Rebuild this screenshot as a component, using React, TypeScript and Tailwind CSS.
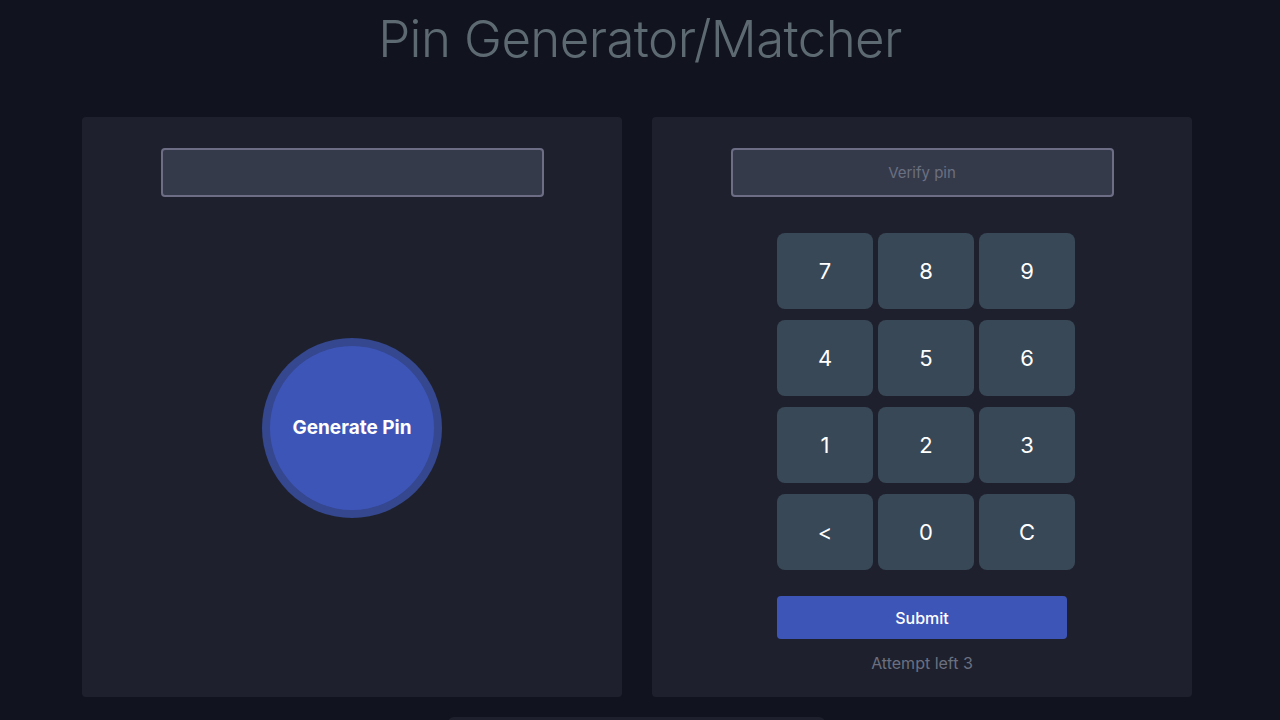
const KEYS = ["7", "8", "9", "4", "5", "6", "1", "2", "3", "<", "0", "C"];

export default function App() {
  return (
    <div className="h-screen bg-[#11141e] font-['Inter','Liberation_Sans',sans-serif] overflow-hidden">
      <h1 className="pt-[7px] text-center text-[51px] font-light leading-[64px] tracking-[-0.6px] text-[#5e6a72]">
        Pin Generator/Matcher
      </h1>

      <div className="mx-auto mt-[46px] flex w-[1110px] gap-[30px] translate-x-[-3px]">
        {/* Generator */}
        <div className="flex h-[580px] w-[540px] flex-col items-center rounded-[4px] bg-[#1e212d] pt-[31px]">
          <input
            type="text"
            className="h-[49px] w-[383px] rounded-[4px] border-2 border-[#6d6e86] bg-[#353a4b] text-center text-[15px] text-white outline-none"
          />
          <div className="mt-[141px] flex h-[180px] w-[180px] items-center justify-center rounded-full bg-[#34478f]">
            <button className="h-[164px] w-[164px] rounded-full bg-[#3e55b8] text-[19px] font-bold text-white">
              Generate Pin
            </button>
          </div>
        </div>

        {/* Matcher */}
        <div className="flex h-[580px] w-[540px] flex-col items-center rounded-[4px] bg-[#1e212d] pt-[31px]">
          <input
            type="text"
            placeholder="Verify pin"
            className="h-[49px] w-[383px] rounded-[4px] border-2 border-[#6d6e86] bg-[#353a4b] text-center text-[15px] text-white outline-none placeholder:text-[#6b7080]"
          />
          <div className="ml-[8px] mt-[36px] grid grid-cols-[96px_96px_96px] gap-x-[5px] gap-y-[11px]">
            {KEYS.map((k) => (
              <button
                key={k}
                className="flex h-[76px] items-center justify-center rounded-[8px] bg-[#394857] text-[22px] text-white"
              >
                {k}
              </button>
            ))}
          </div>
          <button className="mt-[26px] h-[43px] w-[290px] rounded-[4px] bg-[#3e55b8] text-[16px] font-medium text-white">
            Submit
          </button>
          <p className="mt-[12px] text-[16px] text-[#6b7080]">Attempt left 3</p>
        </div>
      </div>

      <div className="ml-[448px] mt-[20px] h-[40px] w-[377px] rounded-[6px] bg-[#1e212d]" />
    </div>
  );
}
